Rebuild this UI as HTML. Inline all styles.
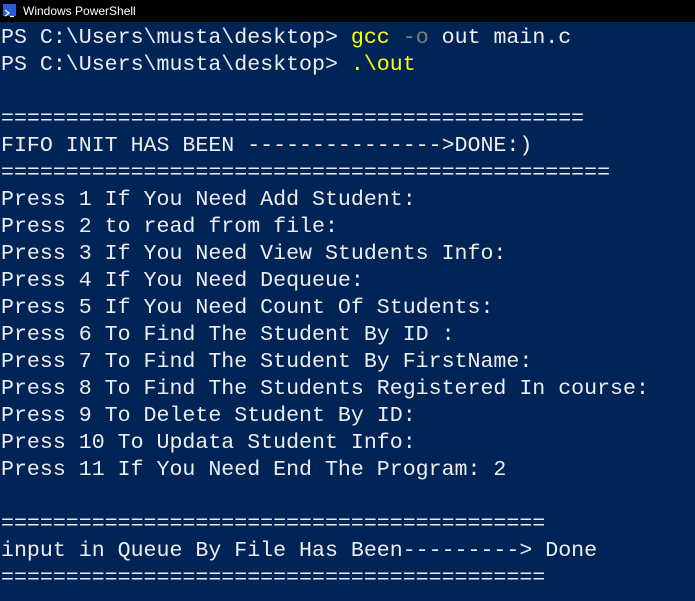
<!DOCTYPE html>
<html><head><style>
html,body{margin:0;padding:0;width:695px;height:601px;overflow:hidden;background:#012456;}
.t{height:22px;background:#000;color:#fff;font:12px "Liberation Sans",sans-serif;line-height:22px;position:relative;}
.t span{position:absolute;left:23px;top:0;}
.ic{position:absolute;left:3px;top:4px;width:13px;height:12px;background:#2a5bd7;}
pre{margin:0;position:absolute;left:1px;top:25px;color:#eeedf0;font:21.6px "Liberation Mono",monospace;line-height:27px;white-space:pre;}
.y{color:#ffff00}.g{color:#808080}
</style></head><body>
<div class="t"><div class="ic"><svg width="13" height="12"><path d="M2 3 L6 6 L2 9" stroke="#fff" stroke-width="1.3" fill="none"/><path d="M7 9.5 H11" stroke="#fff" stroke-width="1.2"/></svg></div><span>Windows PowerShell</span></div>
<pre>PS C:\Users\musta\desktop&gt; <span class="y">gcc</span> <span class="g">-o</span> out main.c
PS C:\Users\musta\desktop&gt; <span class="y">.\out</span>

=============================================
FIFO INIT HAS BEEN ---------------&gt;DONE:)
===============================================
Press 1 If You Need Add Student:
Press 2 to read from file:
Press 3 If You Need View Students Info:
Press 4 If You Need Dequeue:
Press 5 If You Need Count Of Students:
Press 6 To Find The Student By ID :
Press 7 To Find The Student By FirstName:
Press 8 To Find The Students Registered In course:
Press 9 To Delete Student By ID:
Press 10 To Updata Student Info:
Press 11 If You Need End The Program: 2

==========================================
input in Queue By File Has Been---------&gt; Done
==========================================</pre>
</body></html>
